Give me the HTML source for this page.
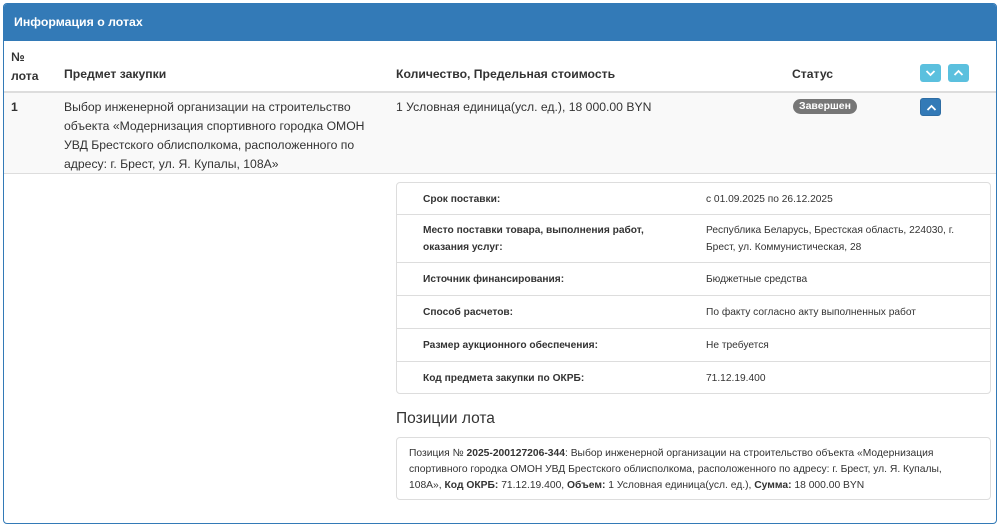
<!DOCTYPE html>
<html><head><meta charset="utf-8"><style>
*{box-sizing:border-box;margin:0;padding:0}
body{width:1000px;height:528px;background:#fff;font-family:"Liberation Sans",Arial,sans-serif;color:#333;position:relative;overflow:hidden}
.panel{position:absolute;left:3px;top:3px;width:994px;height:521px;border:1px solid #337ab7;border-radius:4px;overflow:hidden}
.hd{position:absolute;left:0;top:0;width:100%;height:37px;background:#337ab7;color:#fff;font-weight:bold;font-size:12.3px;padding:11px 0 0 10px}
.a{position:absolute;font-size:12.2px;line-height:19px}
.b{font-weight:bold}
.row1{position:absolute;left:0;top:87px;width:100%;height:83px;background:#f9f9f9;border-top:2px solid #ddd;border-bottom:1px solid #ddd}
.btn{position:absolute;width:21px;height:18px;border-radius:3px;background:#5bc0de}
.btn svg{position:absolute;left:5px;top:5px}
.badge{position:absolute;left:789px;top:95px;background:#777;color:#fff;font-weight:bold;font-size:10.5px;border-radius:8px;padding:1px 6px;line-height:13px}
.det{position:absolute;left:392px;top:178px;width:595px;height:212px;border:1px solid #ddd;border-radius:4px;font-size:10.2px}
.r{position:absolute;left:0;width:100%;border-top:1px solid #ddd}
.l{position:absolute;left:26px;font-weight:bold;line-height:17px}
.v{position:absolute;left:309px;line-height:17px;width:270px}
.pos{position:absolute;left:392px;top:433px;width:595px;height:63px;border:1px solid #ddd;border-radius:4px;font-size:10.3px;line-height:16px;padding:8px 26px 8px 12px}
</style></head><body>
<div class="panel">
<div class="hd">Информация о лотах</div>
<div class="a b" style="left:7px;top:44px">№<br>лота</div>
<div class="a b" style="left:60px;top:61px">Предмет закупки</div>
<div class="a b" style="left:392px;top:61px">Количество, Предельная стоимость</div>
<div class="a b" style="left:788px;top:61px">Статус</div>
<div class="btn" style="left:916px;top:60px"><svg width="11" height="8"><path d="M1.5 2l4 4 4-4" stroke="#fff" stroke-width="1.8" fill="none"/></svg></div>
<div class="btn" style="left:944px;top:60px"><svg width="11" height="8"><path d="M1.5 6l4-4 4 4" stroke="#fff" stroke-width="1.8" fill="none"/></svg></div>
<div class="row1"></div>
<div class="a b" style="left:7px;top:94px">1</div>
<div class="a" style="left:60px;top:94px;width:320px">Выбор инженерной организации на строительство объекта «Модернизация спортивного городка ОМОН УВД Брестского облисполкома, расположенного по адресу: г. Брест, ул. Я. Купалы, 108А»</div>
<div class="a" style="left:392px;top:94px">1 Условная единица(усл. ед.), 18 000.00 BYN</div>
<div class="badge">Завершен</div>
<div class="btn" style="left:916px;top:94px;background:#337ab7;border:1px solid #2e6da4"><svg width="11" height="8"><path d="M1.5 6l4-4 4 4" stroke="#fff" stroke-width="1.8" fill="none"/></svg></div>
<div class="det">
<div class="l" style="top:8px">Срок поставки:</div><div class="v" style="top:8px">с 01.09.2025 по 26.12.2025</div>
<div class="r" style="top:31px"></div>
<div class="l" style="top:39px">Место поставки товара, выполнения работ,<br>оказания услуг:</div><div class="v" style="top:39px">Республика Беларусь, Брестская область, 224030, г. Брест, ул. Коммунистическая, 28</div>
<div class="r" style="top:79px"></div>
<div class="l" style="top:88px">Источник финансирования:</div><div class="v" style="top:88px">Бюджетные средства</div>
<div class="r" style="top:112px"></div>
<div class="l" style="top:121px">Способ расчетов:</div><div class="v" style="top:121px">По факту согласно акту выполненных работ</div>
<div class="r" style="top:145px"></div>
<div class="l" style="top:154px">Размер аукционного обеспечения:</div><div class="v" style="top:154px">Не требуется</div>
<div class="r" style="top:178px"></div>
<div class="l" style="top:187px">Код предмета закупки по ОКРБ:</div><div class="v" style="top:187px">71.12.19.400</div>
</div>
<div class="a" style="left:392px;top:405px;font-size:15.5px;line-height:20px">Позиции лота</div>
<div class="pos">Позиция № <b>2025-200127206-344</b>: Выбор инженерной организации на строительство объекта «Модернизация спортивного городка ОМОН УВД Брестского облисполкома, расположенного по адресу: г. Брест, ул. Я. Купалы, 108А», <b>Код ОКРБ:</b> 71.12.19.400, <b>Объем:</b> 1 Условная единица(усл. ед.), <b>Сумма:</b> 18 000.00 BYN</div>
</div>
</body></html>
